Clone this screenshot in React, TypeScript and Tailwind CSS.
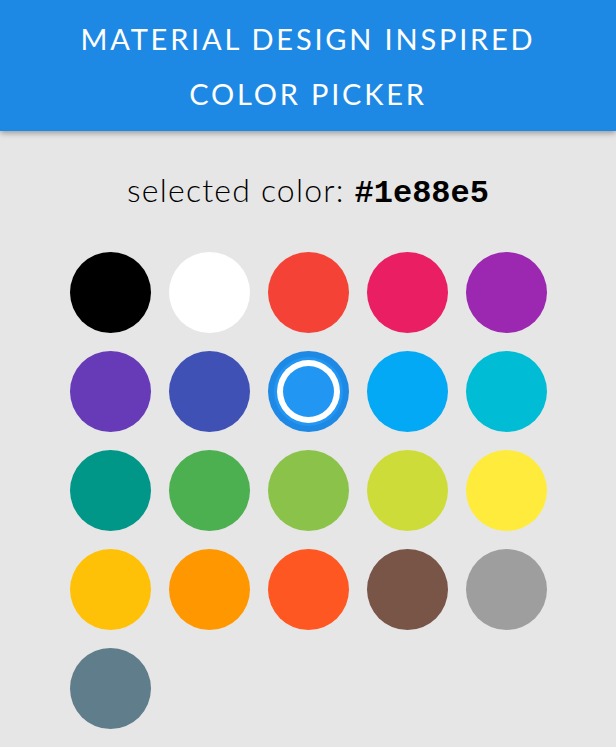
import React, { useState } from 'react';

const colors = [
  '#000000', '#ffffff', '#f44336', '#e91e63', '#9c27b0',
  '#673ab7', '#3f51b5', '#2196f3', '#03a9f4', '#00bcd4',
  '#009688', '#4caf50', '#8bc34a', '#cddc39', '#ffeb3b',
  '#ffc107', '#ff9800', '#ff5722', '#795548', '#9e9e9e',
  '#607d8b',
];

const App: React.FC = () => {
  const [selected, setSelected] = useState('#2196f3');

  return (
    <div className="min-h-[747px] bg-[#e6e6e6]" style={{ fontFamily: 'Lato, "Open Sans", sans-serif' }}>
      {/* Header */}
      <header className="h-[131px] bg-[#1e88e5] shadow-[0_2px_6px_rgba(0,0,0,0.35)] flex flex-col items-center justify-center">
        <h1 className="text-white text-[29px] leading-[55px] tracking-[2.8px] uppercase text-center font-normal">
          Material Design Inspired
          <br />
          Color Picker
        </h1>
      </header>

      {/* Selected color */}
      <p className="mt-[41px] text-center text-[32px] leading-[36px] font-light tracking-[1.2px] text-black">
        selected color:{' '}
        <span className="font-bold tracking-normal" style={{ fontFamily: '"Liberation Mono", monospace' }}>
          #1e88e5
        </span>
      </p>

      {/* Swatches */}
      <div className="mt-[40px] mx-auto w-[477px] grid grid-cols-5 gap-[18px]">
        {colors.map((c) => {
          const active = c === selected;
          return (
            <button
              key={c}
              onClick={() => setSelected(c)}
              className="w-[81px] h-[81px] rounded-full flex items-center justify-center cursor-pointer"
              style={{ backgroundColor: active ? '#1e88e5' : c }}
            >
              {active && (
                <span className="w-[69px] h-[69px] rounded-full bg-[#2196f3] flex items-center justify-center">
                  <span className="w-[63px] h-[63px] rounded-full bg-white flex items-center justify-center">
                    <span className="w-[51px] h-[51px] rounded-full bg-[#2196f3]" />
                  </span>
                </span>
              )}
            </button>
          );
        })}
      </div>
    </div>
  );
};

export default App;
